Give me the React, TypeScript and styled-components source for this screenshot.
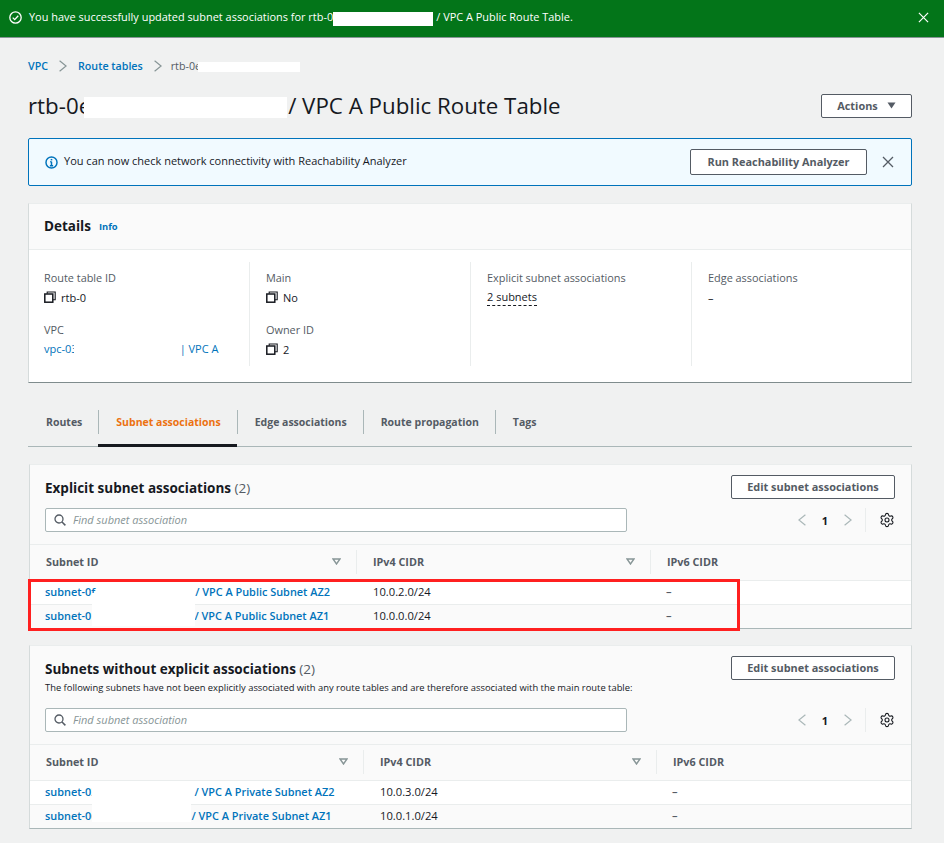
import styled, { createGlobalStyle } from "styled-components";
import { Settings } from "lucide-react";

const GlobalStyle = createGlobalStyle`
  html, body {
    margin: 0;
    background: #f0f1f1;
  }
  body {
    font-family: "Open Sans", "Noto Sans", sans-serif;
    color: #16191f;
    -webkit-font-smoothing: antialiased;
  }
  * {
    box-sizing: border-box;
  }
`;

const Page = styled.div`
  width: 944px;
  height: 843px;
  overflow: hidden;
`;

const Flash = styled.div`
  height: 38px;
  background: #037519;
  border-bottom: 1px solid #879596;
  color: #fff;
  display: flex;
  align-items: center;
  padding: 0 15px 2px 9px;
  font-size: 10.95px;
  gap: 7px;
`;

const FlashText = styled.div`
  flex: 1;
  white-space: nowrap;
`;

// white block that hides an id, pulled back over the last letter like the original
const Redact = styled.span<{ $w: number; $h: number; $pull?: number; $after?: number }>`
  display: inline-block;
  width: ${(p) => p.$w}px;
  height: ${(p) => p.$h}px;
  margin-left: ${(p) => p.$pull ?? 0}px;
  margin-right: ${(p) => p.$after ?? 0}px;
  background: #fff;
  vertical-align: middle;
  position: relative;
`;

// same thing for table rows: the block runs over the divider between two rows
const RowMask = styled.span<{ $w: number; $top: number; $h: number; $pull: number; $after: number }>`
  display: inline-block;
  position: relative;
  width: ${(p) => p.$w}px;
  height: 0;
  margin-left: ${(p) => p.$pull}px;
  margin-right: ${(p) => p.$after}px;

  &::before {
    content: "";
    position: absolute;
    left: 0;
    top: ${(p) => p.$top}px;
    width: 100%;
    height: ${(p) => p.$h}px;
    background: #fff;
  }
`;

const Content = styled.main`
  padding: 0 32px 0 28px;
`;

const Breadcrumbs = styled.nav`
  height: 19px;
  margin-top: 18px;
  display: flex;
  align-items: center;
  gap: 11px;
  font-size: 10.7px;
  font-weight: 600;
`;

const CrumbLink = styled.a`
  color: #0073bb;
`;

const CrumbCurrent = styled.span`
  margin-left: -2px;
  color: #545b64;
  font-weight: 400;
  white-space: nowrap;
`;

const TitleRow = styled.header`
  margin-top: 13px;
  height: 36px;
  display: flex;
  align-items: center;
  justify-content: space-between;
`;

const Title = styled.h1`
  margin: 0 0 2px;
  font-size: 22.3px;
  font-weight: 400;
  white-space: nowrap;
`;

const Button = styled.button<{ $w: number; $h?: number }>`
  width: ${(p) => p.$w}px;
  height: ${(p) => p.$h ?? 24}px;
  flex: none;
  background: #fff;
  border: 1px solid #545b64;
  border-radius: 2px;
  color: #545b64;
  font-family: inherit;
  font-size: 10.9px;
  font-weight: 700;
  display: flex;
  align-items: center;
  justify-content: center;
  gap: 9px;
  padding: 0 0 2px;
`;

const Alert = styled.div`
  margin-top: 14px;
  height: 48px;
  background: #f1faff;
  border: 1px solid #0073bb;
  border-radius: 2px;
  display: flex;
  align-items: center;
  padding: 0 17px 0 16px;
  font-size: 11px;
  gap: 6px;
`;

const AlertText = styled.div`
  flex: 1;
  color: #16191f;
  padding-bottom: 3px;
`;

const CloseSlot = styled.span`
  display: flex;
  margin-left: 9px;
`;

const Card = styled.section`
  margin-top: 17px;
  background: #fff;
  border-top: 1px solid #eaeded;
  border-bottom: 1px solid #7f8c8d;
  border-left: 1px solid #d5dbdb;
  border-right: 1px solid #d5dbdb;
`;

const CardHead = styled.div`
  height: 46px;
  background: #fafafa;
  border-bottom: 1px solid #eaeded;
  display: flex;
  align-items: center;
  gap: 8px;
  padding: 0 15px 2px;
`;

const CardTitle = styled.h2`
  margin: 0;
  font-size: 13.5px;
  font-weight: 700;
`;

const InfoLink = styled.a`
  color: #0073bb;
  font-size: 9.4px;
  font-weight: 700;
  padding-top: 2px;
`;

const DetailGrid = styled.div`
  display: grid;
  grid-template-columns: 206px 221px 221px 1fr;
  padding: 12px 0 16px 15px;
`;

const DetailCol = styled.div`
  height: 104px;
  padding: 6px 0 0 16px;
  border-right: 1px solid #eaeded;

  &:first-child {
    padding-left: 0;
  }
  &:last-child {
    border-right: 0;
  }
`;

const Field = styled.div`
  & + & {
    margin-top: 12px;
  }
`;

const FieldLabel = styled.div`
  height: 20px;
  line-height: 20px;
  font-size: 10.9px;
  color: #545b64;
`;

const FieldValue = styled.div`
  height: 20px;
  display: flex;
  align-items: center;
  gap: 5px;
  padding-bottom: 2px;
  font-size: 11px;
  white-space: nowrap;
`;

const FieldLink = styled.a`
  color: #0073bb;
  font-weight: 500;
`;

const Dashed = styled.span`
  border-bottom: 1px dashed #16191f;
  padding-bottom: 1px;
`;

const Tabs = styled.div`
  margin-top: 27px;
  height: 37px;
  border-bottom: 1px solid #aab7b8;
  display: flex;
  align-items: flex-start;
`;

const Tab = styled.div<{ $active?: boolean }>`
  height: 37px;
  padding: 0 16px 0 18px;
  position: relative;
  display: flex;
  align-items: flex-start;
  font-size: 10.5px;
  font-weight: 700;
  line-height: 24px;
  color: ${(p) => (p.$active ? "#ec7211" : "#545b64")};
  border-bottom: ${(p) => (p.$active ? "3px solid #16191f" : "0")};

  &::after {
    content: "";
    position: absolute;
    right: -1px;
    top: 0;
    height: 24px;
    width: 1px;
    background: #aab7b8;
  }
  &:last-child::after {
    display: none;
  }
`;

const Panel = styled.section<{ $top: number }>`
  margin-top: ${(p) => p.$top}px;
  margin-left: 1px;
  position: relative;
  background: #fafafa;
  border-top: 1px solid #eaeded;
  border-left: 1px solid #d5dbdb;
  border-right: 1px solid #d5dbdb;
  border-bottom: 1px solid #aab7b8;
`;

const PanelHead = styled.div<{ $h: number }>`
  height: ${(p) => p.$h}px;
  padding: 10px 16px 0 15px;
`;

const PanelTop = styled.div`
  height: 28px;
  display: flex;
  align-items: flex-start;
  justify-content: space-between;
`;

const PanelTitle = styled.h3`
  margin: 0;
  font-size: 13.5px;
  line-height: 26px;
  font-weight: 700;
`;

const Count = styled.span`
  font-weight: 400;
  color: #545b64;
`;

const Description = styled.p`
  margin: -2px 0 0;
  font-size: 9.4px;
  line-height: 12px;
  height: 12px;
  white-space: nowrap;
`;

const FilterRow = styled.div<{ $top: number }>`
  display: flex;
  align-items: center;
  justify-content: space-between;
  height: 24px;
  margin-top: ${(p) => p.$top}px;
`;

const SearchBox = styled.div`
  width: 582px;
  height: 24px;
  background: #fff;
  border: 1px solid #aab7b8;
  border-radius: 2px;
  display: flex;
  align-items: center;
  gap: 7px;
  padding: 0 0 1px 8px;
  font-size: 11px;
  font-style: italic;
  color: #879596;
`;

const Pager = styled.div`
  display: flex;
  align-items: center;
  height: 24px;
`;

const PageNum = styled.span`
  width: 38px;
  text-align: center;
  font-size: 11px;
  font-weight: 700;
`;

const PagerGear = styled.span`
  margin-left: 13px;
  padding-left: 13px;
  height: 24px;
  border-left: 1px solid #eaeded;
  display: flex;
  align-items: center;
  color: #545b64;
`;

const TableRow = styled.div<{ $cols: string; $white?: boolean }>`
  display: grid;
  grid-template-columns: ${(p) => p.$cols};
  height: 24px;
  padding-bottom: 2px;
  align-items: center;
  background: ${(p) => (p.$white ? "#fff" : "#fafafa")};
  border-top: 1px solid #eaeded;
  font-size: 11.2px;
  white-space: nowrap;
`;

const HeadRow = styled(TableRow)`
  height: 36px;
  background: #fafafa;
  font-weight: 700;
  color: #545b64;
  font-size: 10.8px;
`;

const HeadCell = styled.div`
  height: 24px;
  display: flex;
  align-items: center;
  justify-content: space-between;
  padding: 0 15px 0 16px;
  border-right: 1px solid #eaeded;

  &:last-child {
    border-right: 0;
  }
`;

const Cell = styled.div`
  padding-left: 15px;
`;

const CidrCell = styled.div`
  padding-left: 16px;
`;

const DashCell = styled.div`
  padding-left: 15px;
  color: #545b64;
  font-weight: 600;
`;

const SubnetLink = styled.a`
  color: #0073bb;
  font-size: 10.9px;
  font-weight: 600;
`;

const Highlight = styled.div`
  position: absolute;
  left: -2px;
  top: 114px;
  width: 712px;
  height: 52px;
  border: 3px solid #ff2020;
  pointer-events: none;
`;

function CheckCircle() {
  return (
    <svg width="13" height="13" viewBox="0 0 16 16" fill="none" stroke="#fff" strokeWidth="1.6">
      <circle cx="8" cy="8" r="7" />
      <path d="M4.6 8.2l2.4 2.4 4.4-4.8" />
    </svg>
  );
}

function CloseIcon({ color = "#545b64", size = 12 }: { color?: string; size?: number }) {
  return (
    <svg width={size} height={size} viewBox="0 0 12 12" fill="none" stroke={color} strokeWidth="1.3">
      <path d="M1 1l10 10M11 1L1 11" />
    </svg>
  );
}

function InfoIcon() {
  return (
    <svg width="13" height="13" viewBox="0 0 16 16" fill="none" stroke="#0073bb" strokeWidth="1.8">
      <circle cx="8" cy="8" r="6.8" />
      <path d="M8 7v5M6 12h4M6.4 7H8" />
      <path d="M8 3.6v1.8" strokeWidth="2" />
    </svg>
  );
}

function CopyIcon() {
  return (
    <svg width="12" height="12" viewBox="0 0 12 12" fill="none" stroke="#16191f" strokeWidth="1.1" style={{ flex: "none" }}>
      <rect x="0.8" y="3" width="8" height="8.2" fill="#fff" strokeWidth="1.5" />
      <path d="M3.2 2.8V1h8v7.8H9" />
    </svg>
  );
}

function SearchIcon() {
  return (
    <svg width="12" height="12" viewBox="0 0 12 12" fill="none" stroke="#545b64" strokeWidth="1.3">
      <circle cx="5" cy="5" r="4" />
      <path d="M8 8l3.4 3.4" strokeWidth="1.5" />
    </svg>
  );
}

function Chevron({ dir, color = "#aab7b8" }: { dir: "left" | "right"; color?: string }) {
  return (
    <svg width="8" height="12" viewBox="0 0 8 12" fill="none" stroke={color} strokeWidth="1.2">
      <path d={dir === "left" ? "M7.4 .8L.9 6l6.5 5.2" : "M.6 .8L7.1 6 .6 11.2"} />
    </svg>
  );
}

function SortIcon() {
  return (
    <svg width="9" height="7" viewBox="0 0 9 7" fill="none" stroke="#879596" strokeWidth="1.4">
      <path d="M1 1h7L4.5 6z" />
    </svg>
  );
}

function Caret() {
  return (
    <svg width="9" height="7" viewBox="0 0 9 7" fill="#545b64">
      <path d="M0.5 0.5h8L4.5 6.5z" />
    </svg>
  );
}

type Subnet = {
  id: string;
  name: string;
  cidr: string;
  w: number;
  top: number;
  h: number;
  pull: number;
  after: number;
};

const explicitSubnets: Subnet[] = [
  { id: "subnet-0f", w: 103, top: -3, h: 33, pull: -3, after: 0, name: "/ VPC A Public Subnet AZ2", cidr: "10.0.2.0/24" },
  { id: "subnet-01", w: 103, top: 0, h: 0, pull: -3, after: -3, name: "/ VPC A Public Subnet AZ1", cidr: "10.0.0.0/24" },
];

const otherSubnets: Subnet[] = [
  { id: "subnet-02", w: 99, top: -14, h: 40, pull: -5, after: 3, name: "/ VPC A Private Subnet AZ2", cidr: "10.0.3.0/24" },
  { id: "subnet-06", w: 99, top: 0, h: 0, pull: -5, after: 0, name: "/ VPC A Private Subnet AZ1", cidr: "10.0.1.0/24" },
];

function SubnetTable({ cols, rows }: { cols: string; rows: Subnet[] }) {
  return (
    <>
      <HeadRow $cols={cols}>
        <HeadCell>
          Subnet ID
          <SortIcon />
        </HeadCell>
        <HeadCell>
          IPv4 CIDR
          <SortIcon />
        </HeadCell>
        <HeadCell>IPv6 CIDR</HeadCell>
      </HeadRow>
      {rows.map((row, i) => (
        <TableRow key={row.id} $cols={cols} $white={i === 0}>
          <Cell>
            <SubnetLink>
              {row.id}
              <RowMask $w={row.w} $top={row.top} $h={row.h} $pull={row.pull} $after={row.after} />
              {row.name}
            </SubnetLink>
          </Cell>
          <CidrCell>{row.cidr}</CidrCell>
          <DashCell>–</DashCell>
        </TableRow>
      ))}
    </>
  );
}

function Filter({ top }: { top: number }) {
  return (
    <FilterRow $top={top}>
      <SearchBox>
        <SearchIcon />
        Find subnet association
      </SearchBox>
      <Pager>
        <Chevron dir="left" />
        <PageNum>1</PageNum>
        <Chevron dir="right" />
        <PagerGear>
          <Settings size={16} strokeWidth={1.6} color="#16191f" />
        </PagerGear>
      </Pager>
    </FilterRow>
  );
}

export default function App() {
  return (
    <Page>
      <GlobalStyle />
      <Flash>
        <CheckCircle />
        <FlashText>
          You have successfully updated subnet associations for rtb-0e
          <Redact $w={100} $h={14} $pull={-6} $after={3} />/ VPC A Public Route Table.
        </FlashText>
        <CloseIcon color="#fff" size={11} />
      </Flash>
      <Content>
        <Breadcrumbs>
          <CrumbLink>VPC</CrumbLink>
          <Chevron dir="right" color="#879596" />
          <CrumbLink>Route tables</CrumbLink>
          <Chevron dir="right" color="#879596" />
          <CrumbCurrent>
            rtb-0e
            <Redact $w={102} $h={10} $pull={-3} />
          </CrumbCurrent>
        </Breadcrumbs>
        <TitleRow>
          <Title>
            rtb-0e
            <Redact $w={203} $h={21} $pull={-7} $after={1} />/ VPC A Public Route Table
          </Title>
          <Button $w={91}>
            Actions
            <Caret />
          </Button>
        </TitleRow>
        <Alert>
          <InfoIcon />
          <AlertText>You can now check network connectivity with Reachability Analyzer</AlertText>
          <Button $w={177} $h={26}>
            Run Reachability Analyzer
          </Button>
          <CloseSlot>
            <CloseIcon />
          </CloseSlot>
        </Alert>
        <Card>
          <CardHead>
            <CardTitle>Details</CardTitle>
            <InfoLink>Info</InfoLink>
          </CardHead>
          <DetailGrid>
            <DetailCol>
              <Field>
                <FieldLabel>Route table ID</FieldLabel>
                <FieldValue>
                  <CopyIcon />
                  rtb-0
                </FieldValue>
              </Field>
              <Field>
                <FieldLabel>VPC</FieldLabel>
                <FieldValue>
                  <FieldLink>
                    vpc-03
                    <Redact $w={106} $h={14} $pull={-4} />| VPC A
                  </FieldLink>
                </FieldValue>
              </Field>
            </DetailCol>
            <DetailCol>
              <Field>
                <FieldLabel>Main</FieldLabel>
                <FieldValue>
                  <CopyIcon />
                  No
                </FieldValue>
              </Field>
              <Field>
                <FieldLabel>Owner ID</FieldLabel>
                <FieldValue>
                  <CopyIcon />2
                </FieldValue>
              </Field>
            </DetailCol>
            <DetailCol>
              <Field>
                <FieldLabel>Explicit subnet associations</FieldLabel>
                <FieldValue>
                  <Dashed>2 subnets</Dashed>
                </FieldValue>
              </Field>
            </DetailCol>
            <DetailCol>
              <Field>
                <FieldLabel>Edge associations</FieldLabel>
                <FieldValue>–</FieldValue>
              </Field>
            </DetailCol>
          </DetailGrid>
        </Card>
        <Tabs>
          <Tab>Routes</Tab>
          <Tab $active>Subnet associations</Tab>
          <Tab>Edge associations</Tab>
          <Tab>Route propagation</Tab>
          <Tab>Tags</Tab>
        </Tabs>
        <Panel $top={17}>
          <PanelHead $h={79}>
            <PanelTop>
              <PanelTitle>
                Explicit subnet associations <Count>(2)</Count>
              </PanelTitle>
              <Button $w={164}>Edit subnet associations</Button>
            </PanelTop>
            <Filter top={5} />
          </PanelHead>
          <SubnetTable cols="327px 294px 1fr" rows={explicitSubnets} />
          <Highlight />
        </Panel>
        <Panel $top={16}>
          <PanelHead $h={98}>
            <PanelTop>
              <PanelTitle>
                Subnets without explicit associations <Count>(2)</Count>
              </PanelTitle>
              <Button $w={164}>Edit subnet associations</Button>
            </PanelTop>
            <Description>
              The following subnets have not been explicitly associated with any route tables and are therefore
              associated with the main route table:
            </Description>
            <Filter top={14} />
          </PanelHead>
          <SubnetTable cols="334px 293px 1fr" rows={otherSubnets} />
        </Panel>
      </Content>
    </Page>
  );
}
